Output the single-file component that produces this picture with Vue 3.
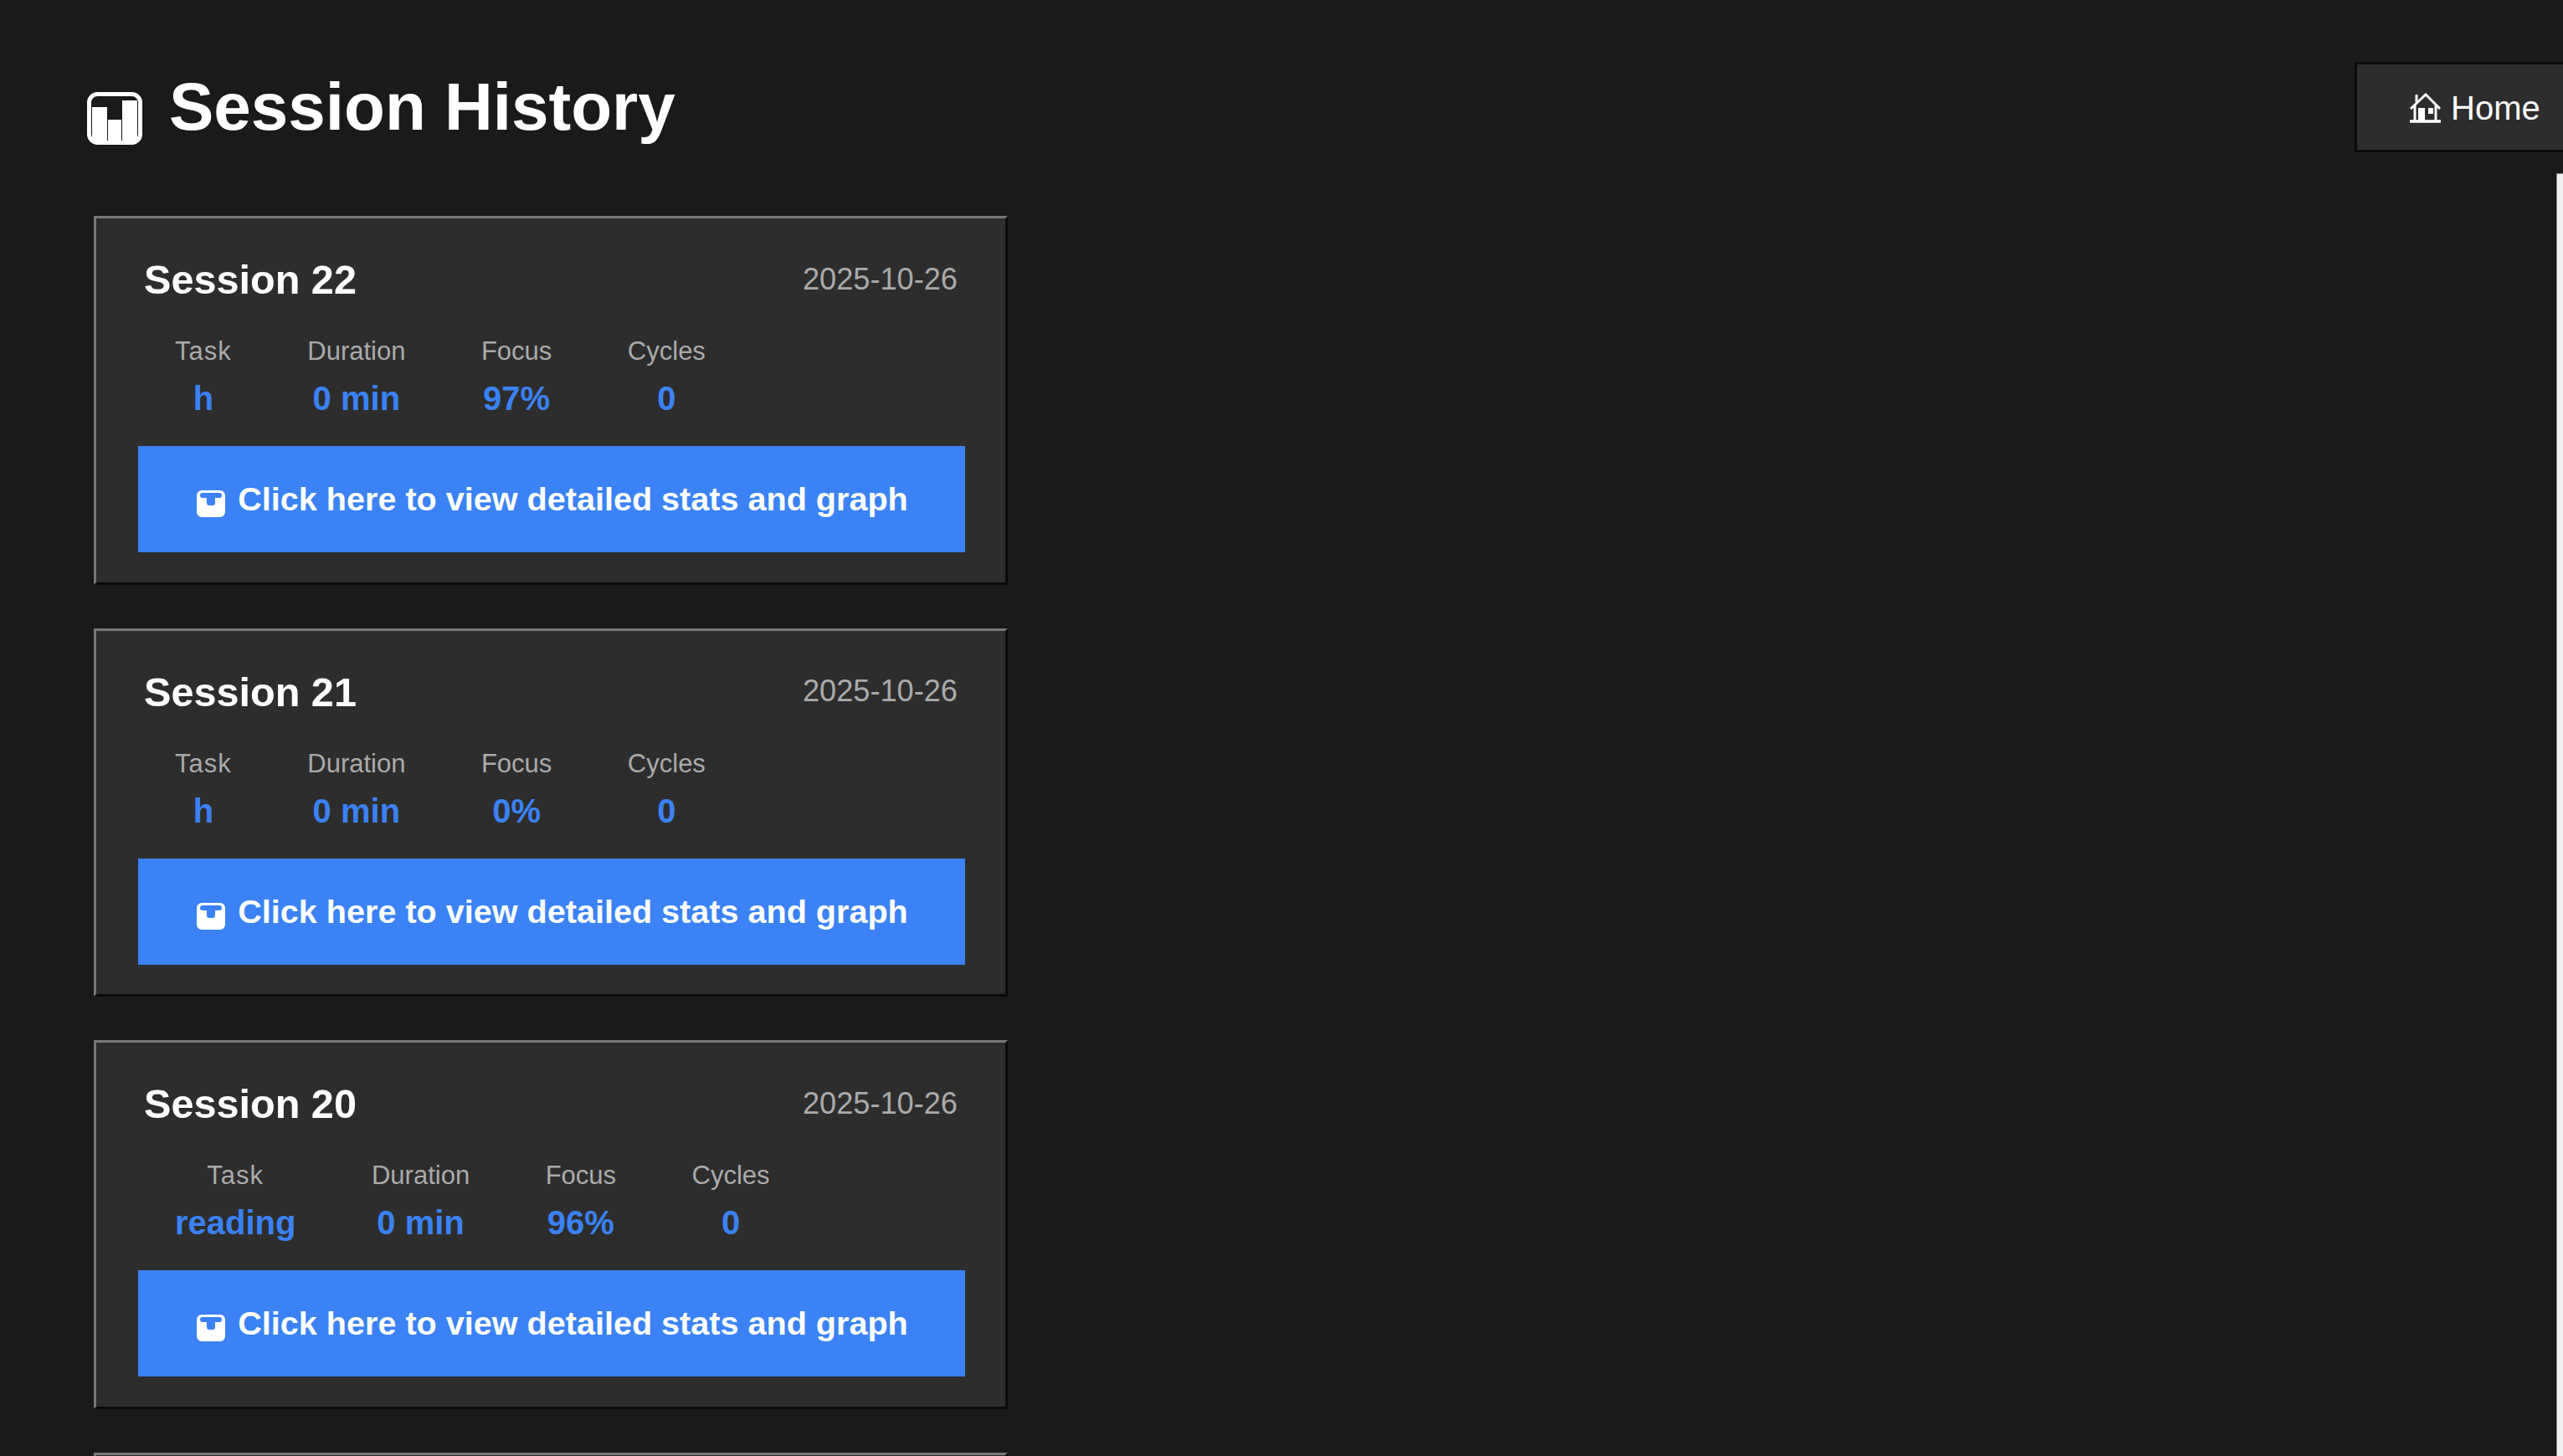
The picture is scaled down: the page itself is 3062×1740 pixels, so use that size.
<script setup>
const sessions = [
  { name: 'Session 22', date: '2025-10-26', task: 'h', duration: '0 min', focus: '97%', cycles: '0' },
  { name: 'Session 21', date: '2025-10-26', task: 'h', duration: '0 min', focus: '0%', cycles: '0' },
  { name: 'Session 20', date: '2025-10-26', task: 'reading', duration: '0 min', focus: '96%', cycles: '0' }
]
</script>

<template>
  <div class="page">
    <header class="top">
      <h1 class="title">
        <svg class="chart" viewBox="0 0 66 63" aria-hidden="true">
          <rect x="2.5" y="2.5" width="61" height="58" rx="10" fill="none" stroke="#fff" stroke-width="5"/>
          <path fill="#fff" d="M6 18h18v41H6zM25 33h16v26H25zM42 10h18v49H42z"/>
        </svg>
        <span class="title-text">Session History</span>
      </h1>
      <button class="home">
        <svg class="house" viewBox="0 0 39 36" aria-hidden="true">
          <path fill="none" stroke="#fff" stroke-width="3" d="M2 19 20 2l17 17M7 15v18M32 15v18M9 2v9"/>
          <path fill="none" stroke="#fff" stroke-width="3.5" d="M1 34h37"/>
          <path fill="#fff" d="M11 18h8v15h-8zM23 18h6v7h-6z"/>
        </svg>
        <span>Home</span>
      </button>
    </header>

    <section class="list">
      <article v-for="s in sessions" :key="s.name" class="card">
        <div class="card-head">
          <h3 class="name">{{ s.name }}</h3>
          <span class="date">{{ s.date }}</span>
        </div>
        <div class="stats">
          <div class="stat">
            <span class="label label-task">Task</span>
            <span class="value">{{ s.task }}</span>
          </div>
          <div class="stat">
            <span class="label">Duration</span>
            <span class="value">{{ s.duration }}</span>
          </div>
          <div class="stat">
            <span class="label">Focus</span>
            <span class="value">{{ s.focus }}</span>
          </div>
          <div class="stat">
            <span class="label">Cycles</span>
            <span class="value">{{ s.cycles }}</span>
          </div>
        </div>
        <button class="view">
          <svg class="tray" viewBox="0 0 34 32" aria-hidden="true">
            <path fill="#fff" fill-rule="evenodd" d="M6 0h22a6 6 0 0 1 6 6v20a6 6 0 0 1-6 6H6a6 6 0 0 1-6-6V6a6 6 0 0 1 6-6zM7 3a3 3 0 0 0 0 6h5v6a3 3 0 0 0 3 3h4a3 3 0 0 0 3-3V9h5a3 3 0 0 0 0-6z"/>
          </svg>
          <span>Click here to view detailed stats and graph</span>
        </button>
      </article>
      <div class="card"></div>
    </section>
    <div class="edge"></div>
  </div>
</template>

<style scoped>
.page {
  position: relative;
  box-sizing: border-box;
  height: 1740px;
  overflow: hidden;
  background: #1a1a1a;
  color: #fff;
  font-family: "Liberation Sans", Arial, sans-serif;
}
.top {
  display: flex;
  align-items: flex-start;
  justify-content: space-between;
  height: 258px;
  padding: 74px 0 0 104px;
  box-sizing: border-box;
}
.title {
  display: flex;
  align-items: flex-start;
  gap: 32px;
  margin: 0;
  font-size: 80px;
  line-height: 92px;
  font-weight: 700;
}
.title-text {
  margin-top: 8px;
}
.chart {
  width: 66px;
  height: 63px;
  margin-top: 36px;
}
.home {
  display: flex;
  align-items: center;
  gap: 11px;
  width: 260px;
  height: 108px;
  margin-right: -11px;
  padding: 2px 0 0 62px;
  box-sizing: border-box;
  background: #2d2d2d;
  border: 3px solid #0a0a0a;
  color: #fff;
  font: 400 40px "Liberation Sans", Arial, sans-serif;
}
.house {
  width: 39px;
  height: 36px;
  flex: none;
}
.list {
  display: flex;
  flex-direction: column;
  gap: 52px;
  width: 1092px;
  margin-left: 112px;
}
.card {
  box-sizing: border-box;
  height: 440.67px;
  flex: none;
  padding: 44px 48px 38px 50px;
  background: #2d2d2d;
  border: 3px solid;
  border-color: #777 #0a0a0a #0a0a0a #777;
}
.card-head {
  display: flex;
  align-items: center;
  justify-content: space-between;
  height: 60px;
  padding: 0 9px 0 7px;
}
.name {
  margin: 0;
  padding-bottom: 2px;
  font-size: 48.6px;
  font-weight: 700;
}
.date {
  padding-bottom: 3px;
  color: #aaa;
  font-size: 36.2px;
}
.stats {
  display: flex;
  gap: 90.5px;
  padding: 0 44px;
  margin-top: 35px;
}
.stat {
  display: flex;
  flex-direction: column;
  align-items: center;
}
.label {
  color: #aaa;
  font-size: 31px;
  line-height: 40px;
}
.label-task {
  letter-spacing: 1px;
}
.value {
  margin-top: 13px;
  color: #3b82f6;
  font-size: 40px;
  line-height: 46px;
  font-weight: 700;
}
.view {
  display: flex;
  align-items: center;
  justify-content: center;
  gap: 15px;
  width: 988px;
  height: 127px;
  margin-top: 34px;
  padding: 0 0 0 2px;
  background: #3b82f6;
  border: 0;
  color: #fff;
  font: 700 39.6px "Liberation Sans", Arial, sans-serif;
}
.tray {
  width: 34px;
  height: 32px;
  margin-top: 11px;
}
.edge {
  position: absolute;
  top: 207px;
  right: 0;
  bottom: 0;
  box-sizing: border-box;
  width: 8px;
  background: #f0f0f0;
  border-top: 1px solid #888;
  border-left: 1px solid #888;
}
</style>
